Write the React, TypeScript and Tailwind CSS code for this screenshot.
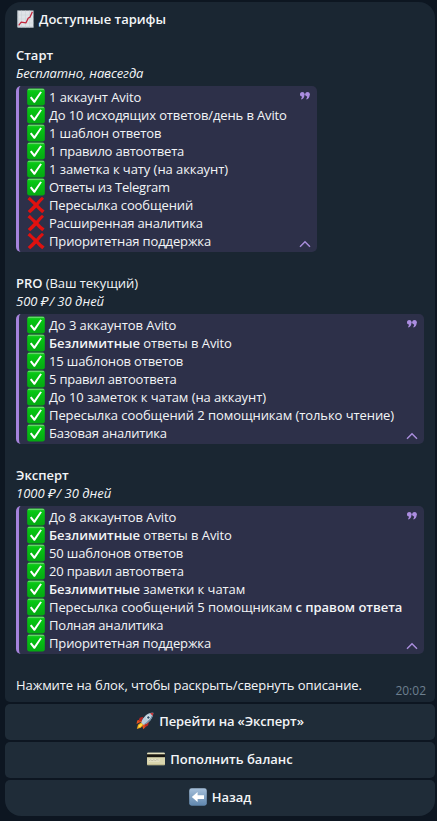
import React from "react";

type Feature = { text: React.ReactNode; off?: boolean };

const Check = () => (
  <svg viewBox="0 0 18 18" className="h-[18px] w-[18px] shrink-0">
    <defs>
      <linearGradient id="green" x1="0" y1="0" x2="0" y2="1">
        <stop offset="0" stopColor="#2fc936" />
        <stop offset="0.2" stopColor="#06c613" />
        <stop offset="1" stopColor="#04a812" />
      </linearGradient>
    </defs>
    <rect x="0.2" y="0.4" width="17.6" height="17.2" rx="2.4" fill="url(#green)" />
    <path d="M1.5 1.4h15" stroke="#7be07d" strokeWidth="0.8" strokeLinecap="round" />
    <path d="M2.9 9.7 4.5 8.6 7.3 12 13.3 3.6 14.9 4.2 8 14.8 6.8 14.8Z" fill="#fff" />
  </svg>
);

const Cross = () => (
  <svg viewBox="0 0 18 18" className="h-[18px] w-[18px] shrink-0">
    <path
      d="M2.8.7C5 3 7 5 9.2 6.8 11 4.6 12.8 2.6 15 .8L17 2.8C15 4.8 13.1 6.7 11.4 8.9 13.3 10.9 15.3 12.8 17.6 14.6L15.3 17.3C13 15.4 11 13.4 9.2 11.4 7.4 13.3 5.4 15.3 3.2 17.2L.7 15C2.8 13.1 4.9 11.1 6.7 9 4.9 7 2.9 5 .5 3.2Z"
      fill="#e0110f"
    />
  </svg>
);

const Chart = () => (
  <svg viewBox="0 0 18 18" className="h-[18px] w-[18px] shrink-0">
    <rect x="1.5" y="0.5" width="16" height="17" fill="#dfe3e8" />
    <path d="M5.5 .5v17M9.5 .5v17M13.5 .5v17M1.5 5h16M1.5 9h16M1.5 13h16" stroke="#c9d0d7" strokeWidth="0.5" />
    <path d="M1.9.5v16.6H17.5" stroke="#b4bcc5" strokeWidth="0.8" fill="none" />
    <path d="M2.7 15.3 5.2 12.2 10 12.8 12.3 8 13.8 7.4 16.4 1.8" stroke="#c3263c" strokeWidth="1.3" fill="none" strokeLinejoin="round" />
  </svg>
);

const Rocket = () => (
  <svg viewBox="0 0 18 18" className="h-[18px] w-[18px] shrink-0">
    <path d="M4.6 7.2 1.2 8.5.5 12 3.4 10.4 6.5 9.5Z" fill="#e5531d" />
    <path d="M10.7 11.4 10.5 14 7.3 17.2 6.4 14.5 8 10.5Z" fill="#e5531d" />
    <path d="M5.3 10.2 2 12.7.8 17 4.8 15.7 7.9 12.5Z" fill="#f0a51c" />
    <path d="M5.3 11.5 3.2 13.3 2.2 15.7 5 14.3 6.5 12.7Z" fill="#ffe24b" />
    <path d="M7.3 4.7 3.7 5.7 2.4 9.5 6 8.7ZM13 9.5 12 13.4 8.5 15.2 9.2 11.7Z" fill="#b62725" />
    <path d="M17.3.7C13.2.7 9.2 2.5 6 8.2L5.3 10.8 7.3 12.8 9.8 12C14.7 9.2 17 5.2 17.3.7Z" fill="#b9ccda" />
    <path d="M17.3.7C15.8 4.8 12.5 9 7.3 12.8L9.8 12C14.7 9.2 17 5.2 17.3.7Z" fill="#718ba0" />
    <path d="M17.3.7 14 1.2 16.8 4Z" fill="#c73538" />
    <circle cx="12.4" cy="5.5" r="2" fill="#edf3f5" />
    <circle cx="12.4" cy="5.5" r="1.2" fill="#244764" />
  </svg>
);

const Card = () => (
  <svg viewBox="0 0 18 18" className="h-[18px] w-[18px] shrink-0">
    <rect y="2.8" width="18" height="12.4" rx="0.8" fill="#d9d5ad" />
    <path d="M.6 3.2h16.8" stroke="#f0edcf" strokeWidth="0.8" />
    <path d="M0 4.3h18v2.9H0z" fill="#17150f" />
    <path d="M1.5 8.8h11v3h-11z" fill="#e6e3c8" />
    <path d="m2 10.8 1.8-1.1 1.2 1 1.8-.9 1.6.7 1.4-.8 2 .4" stroke="#a7a48c" strokeWidth="0.6" fill="none" />
    <path d="M0 14.6h18" stroke="#b4ae80" strokeWidth="0.7" />
  </svg>
);

const Back = () => (
  <svg viewBox="0 0 18 18" className="h-[18px] w-[18px] shrink-0">
    <defs>
      <linearGradient id="blue" x1="0" y1="0" x2="0" y2="1">
        <stop offset="0" stopColor="#a6c0da" />
        <stop offset="1" stopColor="#5f86ad" />
      </linearGradient>
    </defs>
    <rect x="0.2" y="0.3" width="17.6" height="17.4" rx="2.4" fill="url(#blue)" />
    <path d="M2.8 9 8.6 3.9V7.2H15v3.7H8.6v3.2Z" fill="#fff" />
  </svg>
);

const Quote = () => (
  <svg viewBox="0 0 10 8" className="absolute right-[7px] top-[6px] h-2 w-[10px]" fill="#ab8de0">
    <path d="M2.3.2A2.1 2.1 0 0 1 4.5 2.5C4.5 5 3.4 6.8 1.6 7.6L1 6.9C1.6 6.2 2 5.4 2 4.4A2.1 2.1 0 0 1 2.3.2Z" />
    <circle cx="2.3" cy="2.3" r="2.1" />
    <path d="M7.5.2A2.1 2.1 0 0 1 9.7 2.5C9.7 5 8.6 6.8 6.8 7.6L6.2 6.9C6.8 6.2 7.2 5.4 7.2 4.4A2.1 2.1 0 0 1 7.5.2Z" />
    <circle cx="7.5" cy="2.3" r="2.1" />
  </svg>
);

const Collapse = () => (
  <svg viewBox="0 0 12 8" className="absolute bottom-[4px] right-[6px] h-2 w-3">
    <path d="M1 6.8 6 1.8 11 6.8" stroke="#a78bd9" strokeWidth="1.5" fill="none" />
  </svg>
);

const B = ({ children }: { children: React.ReactNode }) => (
  <span className="font-semibold tracking-[-0.02px]">{children}</span>
);

function Plan({ title, price, features, width }: { title: React.ReactNode; price: React.ReactNode; features: Feature[]; width: string }) {
  return (
    <section className="flex flex-col pt-[18px] pb-1">
      <h2>{title}</h2>
      <p className="mb-1 italic tracking-[-0.12px]">{price}</p>
      <div className={`relative overflow-hidden rounded-[5px] border-l-[3px] border-[#a583dc] bg-[#2d3049] py-0.5 pl-2 ${width}`}>
        {features.map((f, i) => (
          <div key={i} className="flex h-[18px] items-center gap-1">
            {f.off ? <Cross /> : <Check />}
            <span>{f.text}</span>
          </div>
        ))}
        <Quote />
        <Collapse />
      </div>
    </section>
  );
}

const start: Feature[] = [
  { text: "1 аккаунт Avito" },
  { text: <span className="tracking-[-0.13px]">До 10 исходящих ответов/день в Avito</span> },
  { text: <span className="tracking-[-0.13px]">1 шаблон ответов</span> },
  { text: <span className="tracking-[-0.2px]">1 правило автоответа</span> },
  { text: "1 заметка к чату (на аккаунт)" },
  { text: <span className="tracking-[-0.24px]">Ответы из Telegram</span> },
  { text: <span className="tracking-[-0.12px]">Пересылка сообщений</span>, off: true },
  { text: <span className="tracking-[-0.17px]">Расширенная аналитика</span>, off: true },
  { text: <span className="tracking-[-0.13px]">Приоритетная поддержка</span>, off: true },
];

const pro: Feature[] = [
  { text: "До 3 аккаунтов Avito" },
  { text: <><B>Безлимитные</B> ответы в Avito</> },
  { text: <span className="tracking-[-0.15px]">15 шаблонов ответов</span> },
  { text: <span className="tracking-[-0.2px]">5 правил автоответа</span> },
  { text: "До 10 заметок к чатам (на аккаунт)" },
  { text: "Пересылка сообщений 2 помощникам (только чтение)" },
  { text: <span className="tracking-[-0.2px]">Базовая аналитика</span> },
];

const expert: Feature[] = [
  { text: "До 8 аккаунтов Avito" },
  { text: <><B>Безлимитные</B> ответы в Avito</> },
  { text: <span className="tracking-[-0.15px]">50 шаблонов ответов</span> },
  { text: <span className="tracking-[-0.2px]">20 правил автоответа</span> },
  { text: <><B>Безлимитные</B> заметки к чатам</> },
  { text: <>Пересылка сообщений 5 помощникам <B>с правом ответа</B></> },
  { text: <span className="tracking-[-0.2px]">Полная аналитика</span> },
  { text: <span className="tracking-[-0.13px]">Приоритетная поддержка</span> },
];

function Action({ icon, label, last }: { icon: React.ReactNode; label: React.ReactNode; last?: boolean }) {
  return (
    <button className={`flex h-9 w-full items-center justify-center gap-[5px] bg-[#1f2c38] pb-0.5 font-semibold tracking-normal ${last ? "rounded-t-[5px] rounded-b-[16px]" : "rounded-[5px]"}`}>
      {icon}
      <span>{label}</span>
    </button>
  );
}

export default function App() {
  return (
    <main className="h-[821px] w-[437px] whitespace-nowrap bg-[#0d1621] pl-[5px] pr-0.5 pt-0.5 font-['Open_Sans','Noto_Sans',sans-serif] text-[13px] leading-[18px] tracking-[-0.07px] text-[#f3f5f7]">
      <article className="h-[700px] rounded-t-[16px] rounded-b-[5px] bg-[#1a2632] pl-[11px] pr-[11px] pt-2">
        <h1 className="flex h-[18px] items-center gap-[5px] font-semibold tracking-normal">
          <Chart />
          <span>Доступные тарифы</span>
        </h1>
        <Plan title={<B>Старт</B>} price="Бесплатно, навсегда" features={start} width="w-[301px]" />
        <Plan title={<><B>PRO</B> (Ваш текущий)</>} price={<span className="tracking-normal">500 ₽<span className="ml-px">/ 30 дней</span></span>} features={pro} width="w-[408px]" />
        <Plan title={<B>Эксперт</B>} price={<span className="tracking-normal">1000 ₽<span className="ml-px">/ 30 дней</span></span>} features={expert} width="w-[408px]" />
        <div className="mt-[18px] flex justify-between">
          <p>Нажмите на блок, чтобы раскрыть/свернуть описание.</p>
          <time className="relative -right-0.5 top-[6px] text-[12px] tracking-normal text-[#6d7f8f]">20:02</time>
        </div>
      </article>
      <nav className="mt-0.5 flex flex-col gap-0.5">
        <Action icon={<Rocket />} label={<span className="tracking-[-0.12px]">Перейти на «Эксперт»</span>} />
        <Action icon={<Card />} label="Пополнить баланс" />
        <Action icon={<Back />} label="Назад" last />
      </nav>
    </main>
  );
}
